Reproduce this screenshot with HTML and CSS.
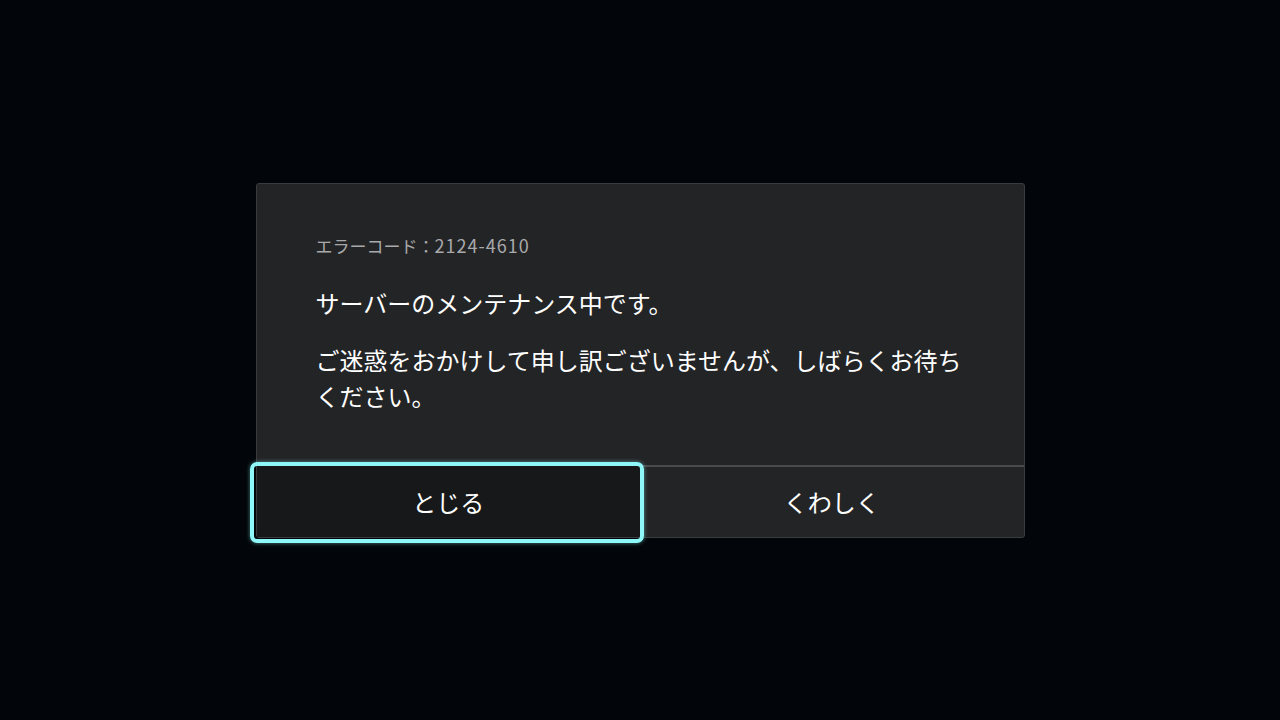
FILE: index.html
```html
<!DOCTYPE html>
<html lang="ja">
<head>
<meta charset="utf-8">
<link rel="stylesheet" href="styles.css">
</head>
<body>
<div class="dialog">
  <div class="content">
    <div class="code">エラーコード：<span class="num">2124-4610</span></div>
    <p class="msg">サーバーのメンテナンス中です。</p>
    <p class="msg">ご迷惑をおかけして申し訳ございませんが、しばらくお待ちください。</p>
  </div>
  <div class="actions">
    <div class="btn focused">とじる</div>
    <div class="btn">くわしく</div>
  </div>
</div>
</body>
</html>
```
FILE: styles.css
```css
html, body {
  margin: 0;
  padding: 0;
  height: 100%;
}
body {
  background: #02060a;
  display: flex;
  align-items: center;
  justify-content: center;
  font-family: "Noto Sans CJK JP", "Noto Sans", sans-serif;
}
.dialog {
  width: 769px;
  height: 355px;
  box-sizing: border-box;
  background: #232426;
  border: 1px solid #3a3b3e;
  border-radius: 3px;
  display: flex;
  flex-direction: column;
}
.content {
  flex: 1;
  padding: 48px 58px 0 59px;
  border-bottom: 2px solid #4a4b4e;
}
.code {
  font-size: 17px;
  line-height: 27px;
  color: #a9a9ab;
  margin-bottom: 26px;
}
.num {
  font-size: 18px;
  letter-spacing: 1px;
}
.msg {
  margin: 0 0 21px 0;
  font-size: 24px;
  line-height: 36px;
  color: #ffffff;
}
.actions {
  height: 70px;
  display: flex;
}
.btn {
  flex: 1;
  display: flex;
  align-items: center;
  justify-content: center;
  font-size: 24px;
  color: #ffffff;
  position: relative;
  margin-top: -1px;
}
.focused {
  background: #17181a;
}
.focused::after {
  content: "";
  position: absolute;
  top: -4px;
  bottom: -6px;
  left: -7px;
  right: -4px;
  border: 4px solid #8ef8f8;
  border-radius: 7px;
  box-shadow: 0 0 4px rgba(142, 248, 248, 0.5);
}
```
